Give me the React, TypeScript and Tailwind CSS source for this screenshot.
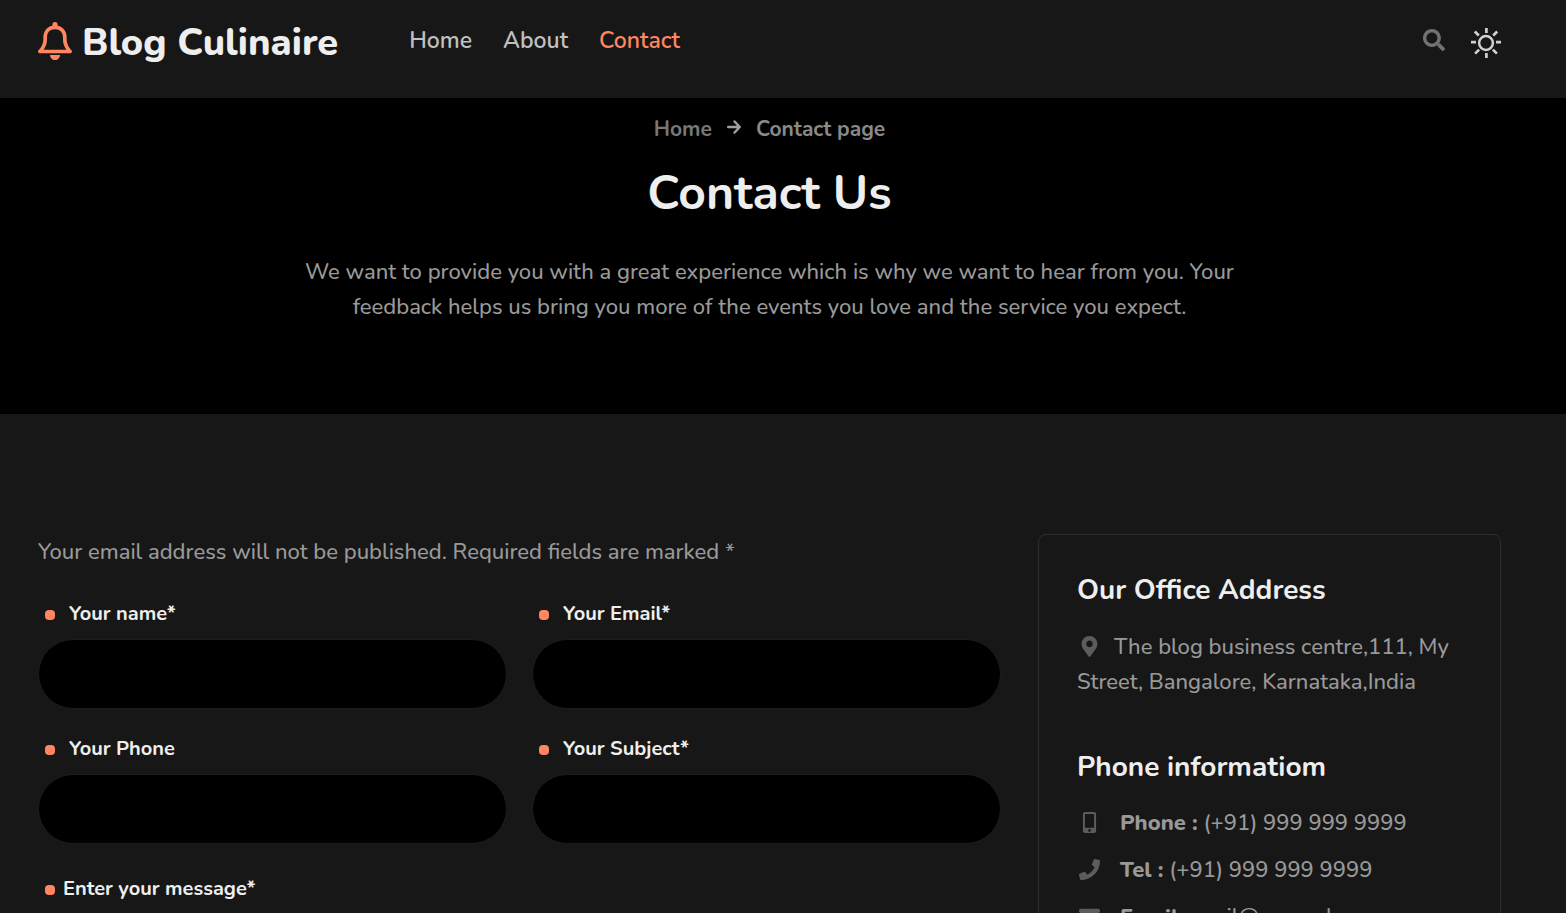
import React from "react";
import { FaSearch, FaMapMarkerAlt, FaMobileAlt, FaPhone, FaEnvelope } from "react-icons/fa";

function BellIcon() {
  return (
    <svg viewBox="0 0 34 38" className="mt-[4px] h-[38px] w-[34px] shrink-0 text-[#ff8660]" fill="none" aria-hidden="true">
      <path
        d="M17 5.300C10.600 5.300 7.200 9.600 7.200 15.200v2.300c0 4.500-1.800 8.300-5.300 12h30.200c-3.500-3.700-5.300-7.500-5.300-12v-2.300c0-5.600-3.400-9.900-9.800-9.900Z"
        stroke="currentColor"
        strokeWidth="3.700"
        strokeLinejoin="round"
      />
      <path d="M14.400 5V2.600a2.600 2.600 0 0 1 5.200 0V5Z" fill="currentColor" />
      <path d="M12 33h10c0 2.900-2.200 5-5 5s-5-2.100-5-5Z" fill="currentColor" />
    </svg>
  );
}

function SunIcon() {
  return (
    <svg viewBox="0 0 30 30" className="size-[30px]" fill="none" stroke="currentColor" aria-hidden="true">
      <circle cx="15" cy="15" r="6.900" strokeWidth="2.500" />
      <path
        d="M15.400 0v5M15.400 25v5M0 14.200h5M25 14.200h5M3.800 3.500l4 4M26.200 3.500l-4 4M4.100 25.600l4-4M25.900 25.600l-4-4"
        strokeWidth="2.700"
      />
    </svg>
  );
}

function ArrowIcon() {
  return (
    <svg viewBox="0 0 14 14" className="mb-[5px] size-[14px] text-[#a0a0a0]" fill="none" stroke="currentColor" strokeWidth="2.500" strokeLinecap="round" strokeLinejoin="round" aria-hidden="true">
      <path d="M1.200 7h11.300M7.600 1.500L12.700 7l-5.100 5.500" />
    </svg>
  );
}

const fields = [
  { id: "name", label: "Your name*", type: "text" },
  { id: "email", label: "Your Email*", type: "email" },
  { id: "phone", label: "Your Phone", type: "tel" },
  { id: "subject", label: "Your Subject*", type: "text" },
];

function Dot() {
  return <span className="mt-[2px] size-[10px] shrink-0 rounded-[4px] bg-[#ff8660]" />;
}

const contacts = [
  { label: "Phone :", value: "(+91) 999 999 9999", href: "tel:+919999999999", Icon: FaMobileAlt },
  { label: "Tel :", value: "(+91) 999 999 9999", href: "tel:+919999999999", Icon: FaPhone },
  { label: "Email :", value: "mail@example.com", href: "mailto:mail@example.com", Icon: FaEnvelope },
];

export default function App() {
  return (
    <div className="min-h-screen bg-[#171717] font-[Nunito,Lato,sans-serif] text-[22px] leading-[35px] font-medium text-[#999999]">
      <header className="flex h-[98px] items-start pr-[65px] pl-[38px]">
        <a href="#" className="mt-[18px] flex items-start gap-[10px] text-[38px] leading-[50px] font-extrabold text-[#eeeeee]">
          <BellIcon />
          Blog Culinaire
        </a>
        <nav className="mt-[23px] ml-[71px] flex gap-[31px] text-[23px] leading-[35px] font-semibold text-[#c0c0c0]">
          <a href="#">Home</a>
          <a href="#">About</a>
          <a href="#" className="text-[#ff8660]">Contact</a>
        </nav>
        <div className="mt-[28px] ml-auto flex items-start gap-[26px]">
          <button type="button" aria-label="Search" className="mt-px text-[#727272]">
            <FaSearch className="size-[22px]" />
          </button>
          <button type="button" aria-label="Toggle theme" className="text-[#d0d0d0]">
            <SunIcon />
          </button>
        </div>
      </header>

      <section className="bg-black pt-[14px] pr-[65px] pb-[89px] pl-[38px] text-center">
        <nav aria-label="Breadcrumb" className="flex items-center justify-center gap-[15px] text-[21px] leading-[35px] font-bold">
          <a href="#" className="text-[#777777]">Home</a>
          <ArrowIcon />
          <span className="text-[#8a8a8a]">Contact page</span>
        </nav>
        <h1 className="mt-[17px] text-[48px] leading-[58px] font-bold text-[#eeeeee]">Contact Us</h1>
        <p className="mx-auto mt-[33px] max-w-[970px]">
          We want to provide you with a great experience which is why we want to hear from you. Your feedback helps us
          bring you more of the events you love and the service you expect.
        </p>
      </section>

      <main className="grid grid-cols-[minmax(0,963fr)_minmax(0,463fr)] items-start gap-[37px] pt-[120px] pr-[65px] pb-[60px] pl-[38px]">
        <form>
          <p className="pt-px">Your email address will not be published. Required fields are marked *</p>
          <div className="mt-[31px] grid grid-cols-2 gap-x-[25px] gap-y-[27px]">
            {fields.map((f) => (
              <div key={f.id}>
                <label htmlFor={f.id} className="flex items-center gap-[14px] pl-[7px] text-[20px] leading-[26px] font-bold text-[#eeeeee]">
                  <Dot />
                  {f.label}
                </label>
                <input id={f.id} type={f.type} className="mt-[12px] block h-[70px] w-full rounded-[35px] border border-[#1c1c1c] bg-black px-[30px] text-[#eeeeee]" />
              </div>
            ))}
          </div>
          <label htmlFor="message" className="mt-[32px] flex items-center gap-[8px] pl-[7px] text-[20px] leading-[26px] font-bold text-[#eeeeee]">
            <Dot />
            Enter your message*
          </label>
          <textarea id="message" className="mt-[12px] block h-[200px] w-full rounded-[35px] border border-[#1c1c1c] bg-black p-[30px] text-[#eeeeee]" />
        </form>

        <aside className="rounded-[8px] border border-[#2e2e2e] p-[38px]">
          <h2 className="text-[28px] leading-[34px] font-bold text-[#eeeeee]">Our Office Address</h2>
          <p className="mt-[23px]">
            <FaMapMarkerAlt className="mr-[14px] ml-[2px] inline-block size-[21px] align-[-3px] text-[#5c5c5c]" />
            The blog business centre,111, My Street, Bangalore, Karnataka,India
          </p>
          <h2 className="mt-[50px] text-[28px] leading-[34px] font-bold text-[#eeeeee]">Phone informatiom</h2>
          <ul className="mt-[22px] flex flex-col gap-[12px]">
            {contacts.map(({ label, value, href, Icon }) => (
              <li key={label} className="flex items-center gap-[20px]">
                <Icon className="mb-[2px] ml-[2px] size-[21px] shrink-0 text-[#5c5c5c]" />
                <span>
                  <strong className="font-extrabold">{label}</strong> <a href={href}>{value}</a>
                </span>
              </li>
            ))}
          </ul>
        </aside>
      </main>
    </div>
  );
}
